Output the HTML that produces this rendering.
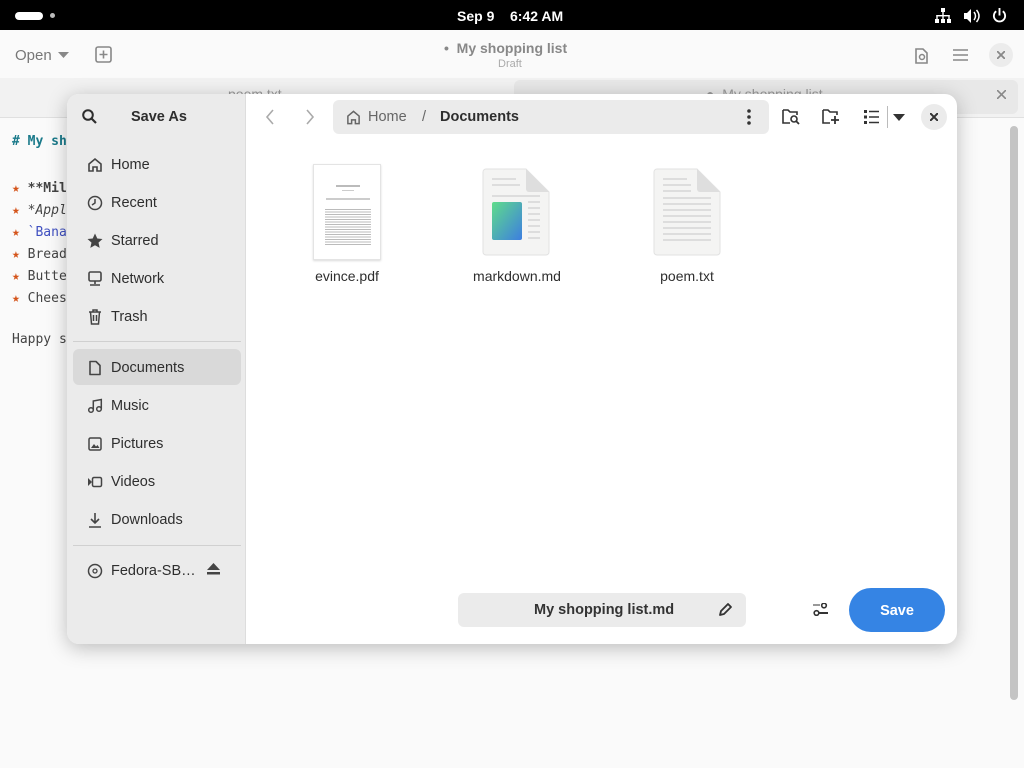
<!DOCTYPE html>
<html><head><meta charset="utf-8"><style>
*{box-sizing:border-box;margin:0;padding:0}
body{width:1024px;height:768px;overflow:hidden;background:#fafafa;font-family:"Liberation Sans","DejaVu Sans",sans-serif;position:relative;color:#2e2e2e}
.abs{position:absolute}
#top{left:0;top:0;width:1024px;height:30px;background:#000;color:#fff;font-size:14px;font-weight:bold}
#hdr{left:0;top:30px;width:1024px;height:48px;background:#fafafa}
#tabs{left:0;top:78px;width:1024px;height:40px;background:#f2f2f2;border-bottom:1px solid #e0e0e0}
.mono{font-family:"DejaVu Sans Mono","Liberation Mono",monospace;font-size:13px;color:#444}
#dlg{left:67px;top:94px;width:890px;height:550px;border-radius:12px;overflow:hidden;background:#fff;box-shadow:0 4px 20px rgba(0,0,0,.25)}
#side{left:0;top:0;width:179px;height:550px;background:#ebebeb;border-right:1px solid #ddd}
.it{position:absolute;left:6px;width:168px;height:36px;font-size:14.5px;color:#2e2e2e}
.it span{position:absolute;left:38px;top:11px}
.it svg{position:absolute;left:14px;top:11px}
.sel{background:#d9d9d9;border-radius:6px}
.sep{position:absolute;left:6px;width:168px;height:1px;background:#d0d0d0}
.fn{font-size:14px;color:#2e2e2e;text-align:center;width:120px}
</style></head><body>
<div id="top" class="abs">
 <div class="abs" style="left:15px;top:12px;width:28px;height:8px;border-radius:4px;background:#fff"></div>
 <div class="abs" style="left:50px;top:13px;width:5px;height:5px;border-radius:50%;background:#bbb"></div>
 <div class="abs" style="left:457px;top:8px">Sep 9</div>
 <div class="abs" style="left:510px;top:8px">6:42 AM</div>
 <svg class="abs" style="left:935px;top:8px" width="16" height="16" viewBox="0 0 16 16" fill="#fff"><rect x="6" y="0" width="4" height="4"/><rect x="0" y="11" width="4" height="4"/><rect x="6" y="11" width="4" height="4"/><rect x="12" y="11" width="4" height="4"/><rect x="7.3" y="4" width="1.4" height="7"/><rect x="1.3" y="7" width="13.4" height="1.4"/><rect x="1.3" y="7" width="1.4" height="4"/><rect x="13.3" y="7" width="1.4" height="4"/></svg>
 <svg class="abs" style="left:963px;top:8px" width="18" height="16" viewBox="0 0 18 16" fill="#fff"><path d="M1 5h3l4-4v14l-4-4H1z"/><path d="M11 4q3 4 0 8M13.5 2q5 6 0 12" stroke="#fff" stroke-width="1.5" fill="none"/></svg>
 <svg class="abs" style="left:992px;top:8px" width="15" height="15" viewBox="0 0 16 16"><path d="M4.5 3.5a6 6 0 1 0 7 0" stroke="#fff" stroke-width="2" fill="none"/><rect x="7" y="0" width="2" height="8" fill="#fff"/></svg>
</div>
<div id="hdr" class="abs">
 <div class="abs" style="left:15px;top:17px;font-size:15px;color:#777">Open</div>
 <svg class="abs" style="left:58px;top:22px" width="11" height="6"><path d="M0 0h11L5.5 6z" fill="#888"/></svg>
 <svg class="abs" style="left:95px;top:16px" width="17" height="17" viewBox="0 0 17 17"><rect x="1" y="1" width="15" height="15" rx="2" stroke="#888" stroke-width="1.6" fill="none"/><path d="M8.5 4.5v8M4.5 8.5h8" stroke="#888" stroke-width="1.6"/></svg>
 <div class="abs" style="left:444px;top:10px;font-size:14px;color:#888;font-weight:bold">•&nbsp; My shopping list</div>
 <div class="abs" style="left:498px;top:28px;font-size:11px;color:#aaa">Draft</div>
 <svg class="abs" style="left:914px;top:18px" width="15" height="16" viewBox="0 0 15 16"><path d="M2 1h7l4 4v10H2z" stroke="#888" stroke-width="1.6" fill="none"/><circle cx="8" cy="9" r="2.5" stroke="#888" stroke-width="1.5" fill="none"/></svg>
 <svg class="abs" style="left:953px;top:19px" width="15" height="12"><path d="M0 1h15M0 6h15M0 11h15" stroke="#888" stroke-width="1.6"/></svg>
 <div class="abs" style="left:989px;top:13px;width:24px;height:24px;border-radius:50%;background:#ececec"></div>
 <svg class="abs" style="left:997px;top:21px" width="8" height="8"><path d="M0 0l8 8M8 0L0 8" stroke="#888" stroke-width="1.8"/></svg>
</div>
<div id="tabs" class="abs">
 <div class="abs" style="left:228px;top:8px;font-size:14px;color:#999">poem.txt</div>
 <div class="abs" style="left:514px;top:2px;width:504px;height:34px;border-radius:6px;background:#e8e8e8"></div>
 <div class="abs" style="left:706px;top:8px;font-size:14px;color:#999">●&nbsp; My shopping list</div>
 <svg class="abs" style="left:997px;top:12px" width="9" height="9"><path d="M0 0l9 9M9 0L0 9" stroke="#888" stroke-width="1.6"/></svg>
</div>
<div class="abs" style="left:0;top:119px;width:1024px;height:649px;background:#fafafa"></div>
<div class="abs mono" style="left:12px;top:134px;color:#1a7a8a;font-weight:bold"># My sh</div>
<div class="abs mono" style="left:12px;top:178px;line-height:22px"><span style="color:#d4541a">★</span> <b>**Mil</b><br><span style="color:#d4541a">★</span> <i>*Appl</i><br><span style="color:#d4541a">★</span> <span style="color:#4050c0">`Bana</span><br><span style="color:#d4541a">★</span> Bread<br><span style="color:#d4541a">★</span> Butte<br><span style="color:#d4541a">★</span> Chees</div>
<div class="abs mono" style="left:12px;top:332px">Happy s</div>
<div class="abs" style="left:1010px;top:126px;width:8px;height:574px;border-radius:4px;background:#c4c4c4"></div>

<div id="dlg" class="abs">
 <div id="side" class="abs">
  <svg class="abs" style="left:15px;top:15px" width="15" height="15" viewBox="0 0 15 15"><circle cx="6" cy="6" r="4.8" stroke="#2e2e2e" stroke-width="2" fill="none"/><path d="M9.5 9.5l4.5 4.5" stroke="#2e2e2e" stroke-width="2.2"/></svg>
  <div class="abs" style="left:64px;top:15px;font-size:14.5px;font-weight:bold">Save As</div>
  <div class="it" style="top:52px"><svg width="16" height="16" viewBox="0 0 16 16"><path d="M2 14V7l6-5 6 5v7h-4v-4H6v4z" stroke="#444" stroke-width="1.6" fill="none"/></svg><span>Home</span></div>
  <div class="it" style="top:90px"><svg width="16" height="16" viewBox="0 0 16 16"><circle cx="8" cy="8" r="6.5" stroke="#444" stroke-width="1.5" fill="none"/><path d="M8 4v4l-3 2" stroke="#444" stroke-width="1.5" fill="none"/></svg><span>Recent</span></div>
  <div class="it" style="top:128px"><svg width="16" height="16" viewBox="0 0 16 16"><path d="M8 0.5l2.3 5 5.2.5-4 3.6 1.2 5.3L8 12.2 3.3 14.9l1.2-5.3-4-3.6 5.2-.5z" fill="#444"/></svg><span>Starred</span></div>
  <div class="it" style="top:166px"><svg width="16" height="16" viewBox="0 0 16 16"><rect x="2" y="1" width="12" height="9" rx="1.5" stroke="#444" stroke-width="1.6" fill="none"/><path d="M8 10v3M3 14h10" stroke="#444" stroke-width="1.6"/></svg><span>Network</span></div>
  <div class="it" style="top:204px"><svg width="16" height="16" viewBox="0 0 16 16"><path d="M2 3h12M6 3V1h4v2M3.5 3l1 12h7l1-12M6.5 6v6M9.5 6v6" stroke="#444" stroke-width="1.5" fill="none"/></svg><span>Trash</span></div>
  <div class="sep" style="top:247px"></div>
  <div class="it sel" style="top:255px"><svg width="16" height="16" viewBox="0 0 16 16"><path d="M3 1.5h6l4 4v9H3z" stroke="#444" stroke-width="1.6" fill="none" stroke-linejoin="round"/></svg><span>Documents</span></div>
  <div class="it" style="top:293px"><svg width="16" height="16" viewBox="0 0 16 16"><circle cx="4" cy="12" r="2.3" stroke="#444" stroke-width="1.5" fill="none"/><circle cx="12" cy="11" r="2.3" stroke="#444" stroke-width="1.5" fill="none"/><path d="M6.3 12V3l8-1.5V11" stroke="#444" stroke-width="1.5" fill="none"/></svg><span>Music</span></div>
  <div class="it" style="top:331px"><svg width="16" height="16" viewBox="0 0 16 16"><rect x="2" y="2" width="12" height="12" rx="1.5" stroke="#444" stroke-width="1.5" fill="none"/><path d="M4 12l3-4 2 2.5 1.5-1.5 2 3z" fill="#444"/></svg><span>Pictures</span></div>
  <div class="it" style="top:369px"><svg width="16" height="16" viewBox="0 0 16 16"><path d="M1 4l4 4-4 4z" fill="#444"/><rect x="5.5" y="3.5" width="9" height="9" rx="1.5" stroke="#444" stroke-width="1.5" fill="none"/></svg><span>Videos</span></div>
  <div class="it" style="top:407px"><svg width="16" height="16" viewBox="0 0 16 16"><path d="M8 1v10M4 7l4 4 4-4M2 15h12" stroke="#444" stroke-width="1.6" fill="none"/></svg><span>Downloads</span></div>
  <div class="sep" style="top:451px"></div>
  <div class="it" style="top:458px"><svg width="16" height="16" viewBox="0 0 16 16"><circle cx="8" cy="8" r="6.5" stroke="#444" stroke-width="1.5" fill="none"/><circle cx="8" cy="8" r="2" stroke="#444" stroke-width="1.3" fill="none"/></svg><span>Fedora-SB…</span>
   <svg style="left:134px;top:11px" width="13" height="12" viewBox="0 0 13 12"><path d="M6.5 0L13 7H0z" fill="#444"/><rect x="0" y="9" width="13" height="2.5" fill="#444"/></svg></div>
 </div>
 <svg class="abs" style="left:198px;top:15px" width="10" height="16"><path d="M8 1L2 8l6 7" stroke="#aaa" stroke-width="1.6" fill="none"/></svg>
 <svg class="abs" style="left:238px;top:15px" width="10" height="16"><path d="M2 1l6 7-6 7" stroke="#aaa" stroke-width="1.6" fill="none"/></svg>
 <div class="abs" style="left:266px;top:6px;width:436px;height:34px;border-radius:6px;background:#ebebeb"></div>
 <svg class="abs" style="left:279px;top:15px" width="15" height="16" viewBox="0 0 16 16"><path d="M2 15V7l6-5 6 5v8h-4v-4H6v4z" stroke="#666" stroke-width="1.6" fill="none"/></svg>
 <div class="abs" style="left:301px;top:15px;font-size:14.5px;color:#666">Home</div>
 <div class="abs" style="left:355px;top:15px;font-size:14.5px;color:#666">/</div>
 <div class="abs" style="left:373px;top:15px;font-size:14.5px;font-weight:bold">Documents</div>
 <svg class="abs" style="left:680px;top:15px" width="4" height="16"><circle cx="2" cy="2" r="1.8" fill="#333"/><circle cx="2" cy="8" r="1.8" fill="#333"/><circle cx="2" cy="14" r="1.8" fill="#333"/></svg>
 <svg class="abs" style="left:715px;top:14px" width="18" height="17" viewBox="0 0 18 17"><path d="M1 2h5l2 2h7v3M8 15H1V2" stroke="#333" stroke-width="1.6" fill="none"/><circle cx="12" cy="11" r="3" stroke="#333" stroke-width="1.6" fill="none"/><path d="M14 13l3 3" stroke="#333" stroke-width="1.8"/></svg>
 <svg class="abs" style="left:755px;top:14px" width="18" height="17" viewBox="0 0 18 17"><path d="M1 2h5l2 2h7v3M8 15H1V2" stroke="#333" stroke-width="1.6" fill="none"/><path d="M13 8v8M9 12h8" stroke="#333" stroke-width="1.8"/></svg>
 <svg class="abs" style="left:797px;top:16px" width="15" height="14"><rect x="0" y="0" width="3" height="3" fill="#333"/><rect x="0" y="5.5" width="3" height="3" fill="#333"/><rect x="0" y="11" width="3" height="3" fill="#333"/><path d="M5 1.5h10M5 7h10M5 12.5h10" stroke="#333" stroke-width="1.6"/></svg>
 <div class="abs" style="left:820px;top:12px;width:1px;height:22px;background:#bbb"></div>
 <svg class="abs" style="left:826px;top:20px" width="12" height="7"><path d="M0 0h12L6 7z" fill="#333"/></svg>
 <div class="abs" style="left:854px;top:10px;width:26px;height:26px;border-radius:50%;background:#ebebeb"></div>
 <svg class="abs" style="left:863px;top:19px" width="8" height="8"><path d="M0 0l8 8M8 0L0 8" stroke="#333" stroke-width="2"/></svg>

 <div class="abs" style="left:246px;top:70px;width:68px;height:96px;background:#fff;border:1px solid #e4e4e4;box-shadow:0 1px 2px rgba(0,0,0,.15)">
  <div class="abs" style="left:22px;top:20px;width:24px;height:2px;background:#bbb"></div>
  <div class="abs" style="left:28px;top:25px;width:12px;height:1px;background:#ccc"></div>
  <div class="abs" style="left:12px;top:33px;width:44px;height:2px;background:#ccc"></div>
  <div class="abs" style="left:11px;top:44px;width:46px;height:36px;background:repeating-linear-gradient(#bbb 0 1px,#fff 1px 2.5px)"></div>
 </div>
 <div class="abs fn" style="left:220px;top:174px">evince.pdf</div>
 <svg class="abs" style="left:415px;top:74px" width="68" height="88" viewBox="0 0 68 88"><path d="M4 1h40l23 23v60a3 3 0 0 1-3 3H4a3 3 0 0 1-3-3V4a3 3 0 0 1 3-3z" fill="#f4f4f3" stroke="#e2e2e2"/><path d="M44 1v20a3 3 0 0 0 3 3h20z" fill="#dedede"/><defs><linearGradient id="g" x1="0" y1="0" x2="1" y2="1"><stop offset="0" stop-color="#5fdc8a"/><stop offset="1" stop-color="#3d7ee0"/></linearGradient></defs><path d="M10 11h24M10 17h28" stroke="#ddd" stroke-width="2"/><rect x="10" y="34" width="30" height="38" rx="2" fill="url(#g)"/><path d="M46 34h12M46 40h12M46 46h12M46 52h12M46 58h12M46 64h12M46 70h12M10 28h48" stroke="#ddd" stroke-width="2"/></svg>
 <div class="abs fn" style="left:390px;top:174px">markdown.md</div>
 <svg class="abs" style="left:586px;top:74px" width="68" height="88" viewBox="0 0 68 88"><path d="M4 1h40l23 23v60a3 3 0 0 1-3 3H4a3 3 0 0 1-3-3V4a3 3 0 0 1 3-3z" fill="#f4f4f3" stroke="#e2e2e2"/><path d="M44 1v20a3 3 0 0 0 3 3h20z" fill="#dedede"/><path d="M10 11h24M10 17h28M10 23h28M10 30h48M10 36h48M10 42h48M10 48h48M10 54h48M10 60h48M10 66h48M10 72h48" stroke="#ddd" stroke-width="2"/></svg>
 <div class="abs fn" style="left:560px;top:174px">poem.txt</div>

 <div class="abs" style="left:391px;top:499px;width:288px;height:34px;border-radius:6px;background:#ebebeb"></div>
 <div class="abs" style="left:467px;top:508px;font-size:14.5px;font-weight:bold;color:#333">My shopping list.md</div>
 <svg class="abs" style="left:651px;top:508px" width="15" height="15" viewBox="0 0 15 15"><path d="M2 13l1-4 7-7 3 3-7 7z" stroke="#333" stroke-width="1.8" fill="none" stroke-linejoin="round"/></svg>
 <svg class="abs" style="left:746px;top:509px" width="15" height="13" viewBox="0 0 15 13"><path d="M0 2h7M8 10h7" stroke="#999" stroke-width="2"/><circle cx="11" cy="2.5" r="2.3" stroke="#333" stroke-width="1.6" fill="none"/><circle cx="3.5" cy="10" r="2.3" stroke="#333" stroke-width="1.6" fill="none"/><path d="M6 10h9" stroke="#333" stroke-width="2"/></svg>
 <div class="abs" style="left:782px;top:494px;width:96px;height:44px;border-radius:22px;background:#3584e4;color:#fff;font-size:14.5px;font-weight:bold;text-align:center;line-height:46px">Save</div>
</div>
</body></html>
